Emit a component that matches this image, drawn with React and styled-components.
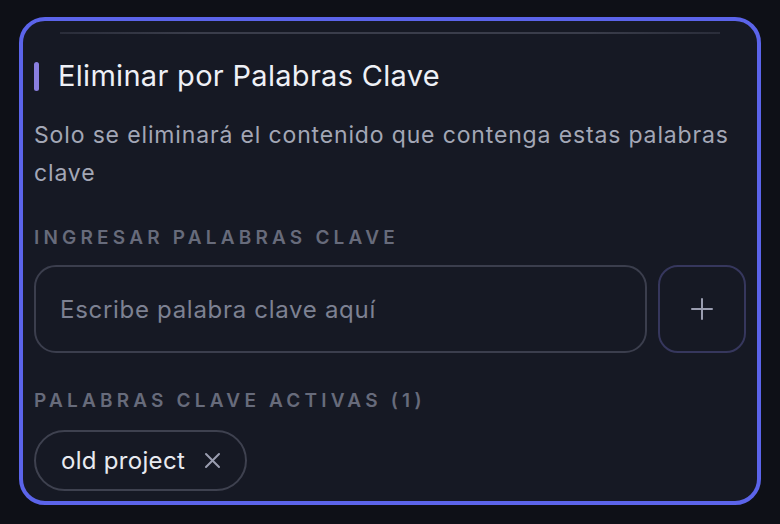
import React from 'react';
import styled, { createGlobalStyle } from 'styled-components';

const Global = createGlobalStyle`
  html, body {
    margin: 0;
    padding: 0;
    background: #0e1017;
  }
  body {
    font-family: Inter, "Noto Sans", "Liberation Sans", sans-serif;
  }
`;

const Page = styled.div`
  box-sizing: border-box;
  height: 524px;
  padding: 17px 19px 19px 19px;
  background: #0e1017;
`;

const Card = styled.section`
  box-sizing: border-box;
  height: 488px;
  border: 4px solid #5b64ea;
  border-radius: 26px;
  background: #161924;
  padding: 0 11px 0 11px;
  overflow: hidden;
`;

const TopRule = styled.div`
  height: 2px;
  margin: 11px 26px 0 26px;
  background: linear-gradient(90deg, #2a2d3a 0%, #3a3d4b 20%, #3a3d4b 80%, #2a2d3a 100%);
`;

const Header = styled.div`
  display: flex;
  align-items: center;
  gap: 19px;
  height: 34px;
  margin-top: 25px;
`;

const Accent = styled.span`
  width: 5px;
  height: 29px;
  border-radius: 3px;
  background: #8a7fe0;
`;

const Title = styled.h2`
  margin: 0;
  font-size: 29px;
  font-weight: 400;
  letter-spacing: 0.3px;
  color: #eef0f6;
  line-height: 34px;
`;

const Description = styled.p`
  margin: 23px 0 0;
  font-size: 23px;
  line-height: 38px;
  letter-spacing: 0.85px;
  color: #a3a7b6;
`;

const Label = styled.div`
  margin-top: ${(p) => p.$top}px;
  font-size: 19px;
  line-height: 20px;
  font-weight: 600;
  letter-spacing: 4.2px;
  text-transform: uppercase;
  color: #676b7b;
`;

const InputRow = styled.div`
  display: flex;
  gap: 11px;
  margin-top: 17px;
`;

const Input = styled.input`
  box-sizing: border-box;
  flex: 1;
  min-width: 0;
  height: 88px;
  border: 2px solid #3b3e4d;
  border-radius: 22px;
  background: transparent;
  padding: 0 24px;
  font-family: inherit;
  font-size: 24px;
  letter-spacing: 0.7px;
  color: #e8eaf0;
  outline: none;

  &::placeholder {
    color: #7d8192;
  }
`;

const AddButton = styled.button`
  box-sizing: border-box;
  width: 88px;
  height: 88px;
  flex: none;
  display: flex;
  align-items: center;
  justify-content: center;
  border: 2px solid #36375d;
  border-radius: 20px;
  background: transparent;
  color: #9a9db0;
  cursor: pointer;
`;

const Chips = styled.div`
  display: flex;
  flex-wrap: wrap;
  gap: 10px;
  margin-top: 19px;
`;

const Chip = styled.div`
  box-sizing: border-box;
  height: 61px;
  display: inline-flex;
  align-items: center;
  gap: 19px;
  padding: 0 24px 0 25px;
  border: 2px solid #3e414f;
  border-radius: 31px;
  font-size: 24px;
  letter-spacing: 0.3px;
  color: #e8eaf0;
`;

const RemoveButton = styled.button`
  display: flex;
  align-items: center;
  padding: 0;
  border: 0;
  background: none;
  color: #9a9db0;
  cursor: pointer;
`;

const PlusIcon = () => (
  <svg width="24" height="24" viewBox="0 0 24 24" fill="none" stroke="currentColor" strokeWidth="2" strokeLinecap="round">
    <path d="M12 2v20M2 12h20" />
  </svg>
);

const XIcon = () => (
  <svg width="17" height="17" viewBox="0 0 17 17" fill="none" stroke="currentColor" strokeWidth="2" strokeLinecap="round">
    <path d="M2 2l13 13M15 2L2 15" />
  </svg>
);

export default function App() {
  const keywords = ['old project'];
  return (
    <>
      <Global />
      <Page>
        <Card>
          <TopRule />
          <Header>
            <Accent />
            <Title>Eliminar por Palabras Clave</Title>
          </Header>
          <Description>
            Solo se eliminará el contenido que contenga estas palabras clave
          </Description>
          <Label $top={36}>Ingresar palabras clave</Label>
          <InputRow>
            <Input placeholder="Escribe palabra clave aquí" />
            <AddButton aria-label="Agregar">
              <PlusIcon />
            </AddButton>
          </InputRow>
          <Label $top={38}>Palabras clave activas ({keywords.length})</Label>
          <Chips>
            {keywords.map((k) => (
              <Chip key={k}>
                {k}
                <RemoveButton aria-label="Quitar">
                  <XIcon />
                </RemoveButton>
              </Chip>
            ))}
          </Chips>
        </Card>
      </Page>
    </>
  );
}
